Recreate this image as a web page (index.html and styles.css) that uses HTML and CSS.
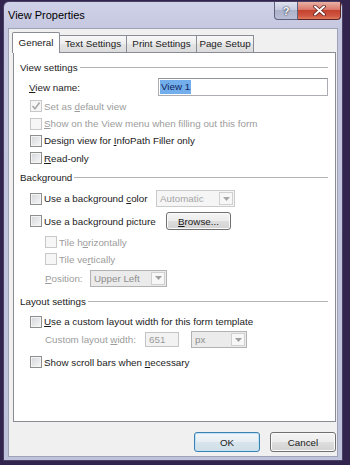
FILE: index.html
```html
<!DOCTYPE html>
<html>
<head>
<meta charset="utf-8">
<title>View Properties</title>
<link rel="stylesheet" href="styles.css">
</head>
<body>
<div class="window">
  <div class="titlebar">
    <span class="title">View Properties</span>
    <div class="caption">
      <div class="cap-btn help">?</div>
      <div class="cap-btn close">
        <svg width="13" height="11" viewBox="0 0 13 11"><path d="M2 1.5 L11 9.5 M11 1.5 L2 9.5" stroke="#5a2020" stroke-width="3.6" stroke-linecap="round"/><path d="M2 1.5 L11 9.5 M11 1.5 L2 9.5" stroke="#fff" stroke-width="2" stroke-linecap="round"/></svg>
      </div>
    </div>
  </div>
  <div class="frame-body">
    <div class="client">
      <div class="tabs">
        <div class="tab active w-gen">General</div>
        <div class="tab w-text">Text Settings</div>
        <div class="tab w-print">Print Settings</div>
        <div class="tab w-page">Page Setup</div>
      </div>
      <div class="panel">
        <div class="section h20"><span class="lbl">View settings</span></div>
        <div class="row h20">
          <span class="name-label"><u>V</u>iew name:</span>
          <div class="textbox"><span class="sel">View 1</span></div>
        </div>
        <div class="row h18 ind1 dim"><span class="check dis"><svg width="10" height="10" viewBox="0 0 10 10"><path d="M1.5 5 L4 7.8 L8.6 1.6" fill="none" stroke="#a8a8a8" stroke-width="1.6"/></svg></span><span class="lbl">Set as <u>d</u>efault view</span></div>
        <div class="row h17 ind1 dim"><span class="check dis"></span><span class="lbl"><u>S</u>how on the View menu when filling out this form</span></div>
        <div class="row h17 ind1"><span class="check"></span><span class="lbl">Design view for <u>I</u>nfoPath Filler only</span></div>
        <div class="row h18 ind1"><span class="check"></span><span class="lbl"><u>R</u>ead-only</span></div>

        <div class="section h21"><span class="lbl">Background</span></div>
        <div class="row h21 ind1">
          <span class="opt"><span class="check"></span><span class="lbl">Use a background <u>c</u>olor</span></span>
          <div class="combo light w-auto"><span class="combo-text">Automatic</span><span class="arrow"><svg width="7" height="4" viewBox="0 0 7 4"><path d="M0 0 H7 L3.5 4 Z" fill="#a8a8a8"/></svg></span></div>
        </div>
        <div class="row h24 ind1">
          <span class="opt"><span class="check"></span><span class="lbl">Use a background picture</span></span>
          <div class="btn browse"><span><u>B</u>rowse...</span></div>
        </div>
        <div class="row h18 ind2 dim"><span class="check dis"></span><span class="lbl">Tile h<u>o</u>rizontally</span></div>
        <div class="row h16 ind2 dim"><span class="check dis"></span><span class="lbl">Tile ve<u>r</u>tically</span></div>
        <div class="row h22 ind2 dim">
          <span class="pos-label"><u>P</u>osition:</span>
          <div class="combo w-pos"><span class="combo-text">Upper Left</span><span class="arrow"><svg width="7" height="4" viewBox="0 0 7 4"><path d="M0 0 H7 L3.5 4 Z" fill="#a0a0a0"/></svg></span></div>
        </div>

        <div class="section h24"><span class="lbl">Layout settings</span></div>
        <div class="row h17 ind1"><span class="check"></span><span class="lbl"><u>U</u>se a custom layout width for this form template</span></div>
        <div class="row h19 ind2 dim">
          <span class="width-label">Custom layout <u>w</u>idth:</span>
          <div class="numbox">651</div>
          <div class="combo w-px"><span class="combo-text">px</span><span class="arrow"><svg width="7" height="4" viewBox="0 0 7 4"><path d="M0 0 H7 L3.5 4 Z" fill="#a0a0a0"/></svg></span></div>
        </div>
        <div class="row h26 ind1"><span class="check"></span><span class="lbl">Show scroll bars when <u>n</u>ecessary</span></div>
      </div>
      <div class="buttons">
        <div class="btn default">OK</div>
        <div class="btn">Cancel</div>
      </div>
    </div>
  </div>
</div>
</body>
</html>
```

FILE: styles.css
```css
* { box-sizing: border-box; }
html, body { margin: 0; padding: 0; }
body {
  width: 350px;
  height: 465px;
  overflow: hidden;
  background: #31244d;
  font-family: "Liberation Sans", Arial, sans-serif;
  font-size: 9.8px;
  color: #1b1b1b;
}
u { text-decoration: underline; text-underline-offset: 1px; }
.lbl { white-space: nowrap; }

.window {
  margin: 1px 0 0 3px;
  width: 340px;
  height: 460px;
  border: 1px solid #4a4066;
  border-radius: 6px 6px 0 0;
  background: linear-gradient(#d0d2e8, #c3c6de 30px, #bec2da);
  display: flex;
  flex-direction: column;
}
.titlebar {
  height: 26px;
  flex: none;
  display: flex;
  align-items: flex-start;
  padding-left: 4px;
}
.title {
  flex: 1;
  font-size: 11px;
  line-height: 26px;
  color: #000;
}
.caption { display: flex; margin-right: 1px; }
.cap-btn {
  height: 18px;
  display: flex;
  align-items: center;
  justify-content: center;
}
.help {
  width: 24px;
  border: 1px solid #5f627c;
  border-top: none;
  border-radius: 0 0 0 4px;
  background: linear-gradient(#dfe2ef, #c6cadf 45%, #adb2cb 50%, #b9bed5);
  color: #fff;
  font-weight: bold;
  font-size: 11px;
  text-shadow: 0 0 2px #2c2f48, 0 0 1px #2c2f48;
}
.close {
  width: 43px;
  border: 1px solid #5d2626;
  border-left: none;
  border-top: none;
  border-radius: 0 0 4px 0;
  background: linear-gradient(#eab0a4, #d9786a 45%, #c4422e 50%, #cf5540 80%, #e07a5e);
}

.frame-body {
  flex: 1;
  display: flex;
  padding: 0 4px 3px;
}
.client {
  flex: 1;
  border: 1px solid #9ea2b7;
  background: #f0f0f0;
  padding: 3px 1px 0 4px;
  display: flex;
  flex-direction: column;
}

.tabs {
  display: flex;
  align-items: flex-end;
  margin-left: -1px;
}
.tab {
  height: 17px;
  border: 1px solid #898c95;
  border-bottom: none;
  border-left: none;
  background: linear-gradient(#f7f7f7, #eeeeee 50%, #e4e4e4 50%, #dcdcdc);
  text-align: center;
  line-height: 16px;
}
.tab.active {
  height: 21px;
  margin-bottom: -1px;
  border-left: 1px solid #898c95;
  border-radius: 2px 2px 0 0;
  background: #fff;
  line-height: 19px;
  position: relative;
  z-index: 1;
}
.w-gen { width: 48px; }
.w-text { width: 67px; }
.w-print { width: 70px; }
.w-page { width: 57px; }

.panel {
  height: 370px;
  flex: none;
  background: #fff;
  border: 1px solid #898c95;
  padding: 4px 7px 0 6px;
  display: flex;
  flex-direction: column;
}
.section {
  display: flex;
  align-items: center;
  gap: 2px;
  color: #1b1b1b;
}
.section::after {
  content: "";
  flex: 1;
  height: 1px;
  background: #b3b3b3;
}
.row {
  display: flex;
  align-items: center;
  white-space: nowrap;
}
.h16 { height: 16px; }
.h17 { height: 17px; }
.h18 { height: 18px; }
.h19 { height: 19px; }
.h20 { height: 20px; }
.h21 { height: 21px; }
.h22 { height: 22px; }
.h24 { height: 24px; }
.h26 { height: 26px; }
.ind1 { padding-left: 10px; }
.ind2 { padding-left: 25px; }
.dim { color: #9c9c9c; }

.name-label {
  width: 138px;
  padding-left: 9px;
  flex: none;
}
.textbox {
  flex: 1;
  height: 18px;
  border: 1px solid #abadb3;
  border-top-color: #8f939c;
  background: #fff;
  display: flex;
  align-items: center;
  padding-left: 1px;
}
.sel {
  background: #72aeec;
  color: #10245a;
  padding: 1px;
  line-height: 12px;
}

.check {
  width: 12px;
  height: 12px;
  flex: none;
  margin-right: 2px;
  border: 1px solid #8e8f8f;
  background: linear-gradient(135deg, #d4d6da, #f7f7f7);
  box-shadow: inset 0 0 0 1px #f4f4f4;
  display: flex;
  align-items: center;
  justify-content: center;
}
.check.dis {
  border-color: #c8c8c8;
  background: #f6f6f6;
  box-shadow: none;
}

.opt {
  width: 126px;
  flex: none;
  display: flex;
  align-items: center;
}
.combo {
  height: 17px;
  border: 1px solid #b2b2b2;
  background: #ebebeb;
  color: #8e8e8e;
  display: flex;
  align-items: center;
  padding-left: 3px;
}
.combo.light {
  border-color: #cacaca;
  background: #f5f5f5;
  color: #a5a5a5;
}
.combo-text { flex: 1; }
.arrow {
  width: 14px;
  height: 13px;
  margin-right: 1px;
  border: 1px solid #d0d0d0;
  background: #f7f7f7;
  display: flex;
  align-items: center;
  justify-content: center;
}
.w-auto { width: 79px; }
.w-pos { width: 77px; }
.w-px { width: 56px; margin-left: 12px; }

.pos-label { width: 45px; flex: none; }
.width-label { width: 100px; flex: none; }
.numbox {
  width: 34px;
  height: 15px;
  border: 1px solid #c4c4c4;
  background: #f2f2f2;
  color: #9a9a9a;
  padding-left: 3px;
  line-height: 13px;
}

.btn {
  width: 66px;
  height: 20px;
  border: 1px solid #707070;
  border-radius: 3px;
  background: linear-gradient(#f4f4f4, #ececec 50%, #dedede 50%, #d2d2d2);
  box-shadow: inset 0 0 0 1px #fbfbfb;
  display: flex;
  align-items: center;
  justify-content: center;
  color: #1b1b1b;
}
.btn.browse {
  width: 65px;
  height: 18px;
  margin-left: 10px;
}
.btn.default {
  border-color: #3c7fb1;
  background: linear-gradient(#f1f6f9, #e6eef3 50%, #d8e5ec 50%, #d0dee6);
  box-shadow: inset 0 0 0 1px #bfe2f5;
}
.buttons {
  display: flex;
  justify-content: flex-end;
  gap: 10px;
  padding-top: 10px;
}
```
